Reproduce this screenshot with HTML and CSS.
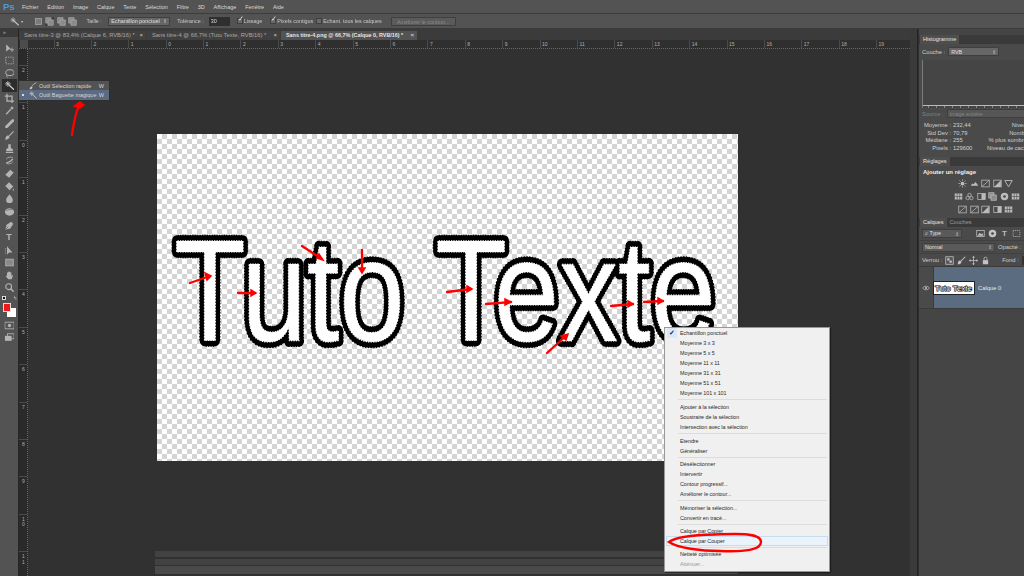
FILE: index.html
```html
<!DOCTYPE html>
<html lang="fr">
<head>
<meta charset="utf-8">
<title>Photoshop</title>
<link rel="stylesheet" href="styles.css">
</head>
<body>
<svg class="defs" width="0" height="0">
  <symbol id="i-move" viewBox="0 0 12 12"><path d="M2 1v9l2.500-2.500 3-1L2 1z" fill="currentColor"/><path d="M9 5v5M6.500 7.500h5" stroke="currentColor" fill="none"/></symbol>
  <symbol id="i-marq" viewBox="0 0 12 12"><rect x="1.500" y="2" width="9" height="8" fill="none" stroke="currentColor" stroke-dasharray="1.500 1.200"/></symbol>
  <symbol id="i-lasso" viewBox="0 0 12 12"><ellipse cx="6.500" cy="5" rx="5" ry="3.500" fill="none" stroke="currentColor" stroke-width="1.200"/><path d="M3 8c-1 1 0 2 1 3" fill="none" stroke="currentColor"/></symbol>
  <symbol id="i-wand" viewBox="0 0 12 12"><path d="M5 5l6.500 6" stroke="currentColor" stroke-width="1.500"/><path d="M4 .5v7M.5 4h7M1.800 1.800l4.400 4.400M6.200 1.800L1.800 6.200" stroke="currentColor" stroke-width=".9"/></symbol>
  <symbol id="i-quick" viewBox="0 0 12 12"><path d="M11 1C7 3 5 5 4 7" stroke="currentColor" stroke-width="1.300" fill="none"/><path d="M1 11c0-3 1-4 3-4 1 0 1.500 1 1 2-1 1.500-2 2-4 2z" fill="currentColor"/></symbol>
  <symbol id="i-crop" viewBox="0 0 12 12"><path d="M3 0v9h9M0 3h9v9" fill="none" stroke="currentColor" stroke-width="1.500"/></symbol>
  <symbol id="i-drop" viewBox="0 0 12 12"><path d="M2 10.500L7.500 4.500" stroke="currentColor" stroke-width="1.500"/><path d="M7 3l2-2 2 2-2 2z" fill="currentColor"/></symbol>
  <symbol id="i-heal" viewBox="0 0 12 12"><path d="M2.500 10L10 2.500" stroke="currentColor" stroke-width="3.500" stroke-linecap="round"/></symbol>
  <symbol id="i-brush" viewBox="0 0 12 12"><path d="M5 7l6-6" stroke="currentColor" stroke-width="1.400"/><path d="M1 11c0-3 1-5 3-5l2 1.500c0 2-2 3.500-5 3.500z" fill="currentColor"/></symbol>
  <symbol id="i-stamp" viewBox="0 0 12 12"><path d="M4.500 1h3v4l2.500 2v2H2V7l2.500-2zM1.500 10h9v1.500h-9z" fill="currentColor"/></symbol>
  <symbol id="i-hist" viewBox="0 0 12 12"><path d="M2 9c3-1 6-2 8-5" fill="none" stroke="currentColor" stroke-width="1.500"/><path d="M2 4.500c2-3 6-3 8-2M10 7.500c-2 3-6 3-8 2" fill="none" stroke="currentColor"/></symbol>
  <symbol id="i-erase" viewBox="0 0 12 12"><path d="M7 1.500l4 3.500-5.500 6L1 7.500z" fill="currentColor"/></symbol>
  <symbol id="i-fill" viewBox="0 0 12 12"><path d="M5.500 1l5 5-4.500 4.500-5-5z" fill="currentColor"/><path d="M10.500 8c1 1.500 1 3 0 3s-1-1.500 0-3z" fill="currentColor"/></symbol>
  <symbol id="i-tear" viewBox="0 0 12 12"><path d="M6 1c3 4 4 5 4 7a4 3.500 0 0 1-8 0c0-2 1-3 4-7z" fill="currentColor"/></symbol>
  <symbol id="i-sponge" viewBox="0 0 12 12"><ellipse cx="6" cy="6.500" rx="5.500" ry="4.500" fill="currentColor"/><path d="M2 5c2-1.500 5-2 8-1" stroke="#555" fill="none" stroke-width=".7"/></symbol>
  <symbol id="i-pen" viewBox="0 0 12 12"><path d="M1 11l1.500-6L8 1.500 10.500 4 7 9.500z" fill="currentColor"/><path d="M1 11l3.500-3.500" stroke="#555" stroke-width=".8"/></symbol>
  <symbol id="i-path" viewBox="0 0 12 12"><path d="M3 1v10l2.500-2.500h4z" fill="currentColor"/><path d="M1 3v7" stroke="currentColor" stroke-dasharray="1 1"/></symbol>
  <symbol id="i-rect" viewBox="0 0 12 12"><rect x="1.500" y="2" width="9" height="8" fill="#8a8a8a" stroke="currentColor"/></symbol>
  <symbol id="i-hand" viewBox="0 0 12 12"><path d="M3 6V2.500h1.300V5V1.500h1.400V5V1.500H7V5V2.500h1.300V7l1-1.500 1 .5L8.500 10.500h-4L1.500 7l.7-.8z" fill="currentColor"/></symbol>
  <symbol id="i-zoom" viewBox="0 0 12 12"><circle cx="5" cy="5" r="3.500" fill="none" stroke="currentColor" stroke-width="1.300"/><path d="M7.500 7.500l3.500 3.500" stroke="currentColor" stroke-width="1.800"/></symbol>
  <symbol id="i-mask" viewBox="0 0 12 12"><rect x=".5" y="2" width="11" height="8" fill="none" stroke="currentColor"/><circle cx="6" cy="6" r="2" fill="currentColor"/></symbol>
  <symbol id="i-screen" viewBox="0 0 12 12"><rect x="3.500" y="1.500" width="8" height="6" fill="none" stroke="currentColor"/><rect x=".5" y="4" width="8" height="6" fill="currentColor"/></symbol>
  <symbol id="i-sun" viewBox="0 0 12 12"><circle cx="6" cy="6" r="2.500" fill="currentColor"/><path d="M6 .5v2M6 9.500v2M.5 6h2M9.500 6h2M2 2l1.500 1.500M8.500 8.500L10 10M10 2L8.500 3.500M3.500 8.500L2 10" stroke="currentColor"/></symbol>
  <symbol id="i-levels" viewBox="0 0 12 12"><path d="M1 9l2-3 2 1 2-3 2 2 2 3z" fill="currentColor"/></symbol>
  <symbol id="i-curve" viewBox="0 0 12 12"><rect x="1" y="1.500" width="10" height="9" fill="none" stroke="currentColor"/><path d="M1.500 10L10.500 2" stroke="currentColor"/></symbol>
  <symbol id="i-expo" viewBox="0 0 12 12"><rect x="1" y="1.500" width="10" height="9" fill="none" stroke="currentColor"/><path d="M1.500 10.500l9-9v9z" fill="currentColor"/></symbol>
  <symbol id="i-vib" viewBox="0 0 12 12"><path d="M1 2h10L6 10.500z" fill="none" stroke="currentColor" stroke-width="1.200"/></symbol>
  <symbol id="i-grid" viewBox="0 0 12 12"><rect x="1" y="2" width="10" height="8" fill="currentColor"/><path d="M4.300 2v8M7.600 2v8M1 6h10" stroke="#474747" stroke-width=".8"/></symbol>
  <symbol id="i-tri" viewBox="0 0 12 12"><circle cx="6" cy="4" r="2.300" fill="none" stroke="currentColor"/><circle cx="3.500" cy="8" r="2.300" fill="none" stroke="currentColor"/><circle cx="8.500" cy="8" r="2.300" fill="none" stroke="currentColor"/></symbol>
  <symbol id="i-half" viewBox="0 0 12 12"><rect x="1" y="2" width="10" height="8" fill="none" stroke="currentColor"/><rect x="6" y="2" width="5" height="8" fill="currentColor"/></symbol>
  <symbol id="i-balls" viewBox="0 0 12 12"><circle cx="6" cy="6" r="5" fill="currentColor"/><circle cx="6" cy="6" r="1.800" fill="#474747"/></symbol>
  <symbol id="i-lock" viewBox="0 0 12 12"><rect x="2.500" y="5.500" width="7" height="5.500" fill="currentColor"/><path d="M4 5.500V3.500a2 2 0 0 1 4 0v2" fill="none" stroke="currentColor"/></symbol>
  <symbol id="i-arrows" viewBox="0 0 12 12"><path d="M6 .5v11M.5 6h11" stroke="currentColor"/><path d="M6 0l2 2H4zM6 12l2-2H4zM0 6l2-2v4zM12 6l-2-2v4z" fill="currentColor"/></symbol>
  <symbol id="i-eye" viewBox="0 0 12 12"><path d="M1 6c2-3.500 8-3.500 10 0-2 3.500-8 3.500-10 0z" fill="none" stroke="currentColor"/><circle cx="6" cy="6" r="1.500" fill="currentColor"/></symbol>
  <symbol id="i-checker" viewBox="0 0 12 12"><rect x="1" y="1" width="10" height="10" fill="#555" stroke="currentColor"/><path d="M3 3h3v3H3zM6 6h3v3H6z" fill="currentColor"/></symbol>
  <symbol id="i-img" viewBox="0 0 12 12"><rect x="1" y="2" width="10" height="8" fill="none" stroke="currentColor"/><path d="M2 9l3-4 2 2 1.500-1.500L10 9z" fill="currentColor"/></symbol>
  <symbol id="i-square" viewBox="0 0 12 12"><rect x="2" y="2" width="8" height="8" fill="#7a7a7a" stroke="currentColor"/></symbol>
  <symbol id="i-square2" viewBox="0 0 12 12"><rect x="1" y="1" width="7" height="7" fill="#8a8a8a" stroke="currentColor"/><rect x="4" y="4" width="7" height="7" fill="#8a8a8a" stroke="currentColor"/></symbol>
</svg>

<div class="app">
  <header class="menubar">
    <span class="logo">Ps</span>
    <nav class="menus">
      <span>Fichier</span><span>Edition</span><span>Image</span><span>Calque</span><span>Texte</span><span>Sélection</span><span>Filtre</span><span>3D</span><span>Affichage</span><span>Fenêtre</span><span>Aide</span>
    </nav>
  </header>

  <div class="options">
    <svg class="ic opt-wand"><use href="#i-wand"/></svg>
    <span class="opt-caret">▾</span>
    <svg class="ic opt-mode"><use href="#i-square"/></svg>
    <svg class="ic opt-mode on"><use href="#i-square2"/></svg>
    <svg class="ic opt-mode"><use href="#i-square2"/></svg>
    <svg class="ic opt-mode"><use href="#i-square2"/></svg>
    <span class="opt-label taille">Taille :</span>
    <span class="select sel-taille">Echantillon ponctuel<i>⇕</i></span>
    <span class="opt-label tol">Tolérance :</span>
    <span class="input">30</span>
    <span class="check on lissage"></span><span class="opt-label">Lissage</span>
    <span class="check on contig"></span><span class="opt-label">Pixels contigus</span>
    <span class="check echant"></span><span class="opt-label">Echant. tous les calques</span>
    <span class="btn-off">Améliorer le contour...</span>
  </div>

  <div class="main">
    <aside class="tools">
      <div class="tools-head">»</div>
      <svg class="ic tool"><use href="#i-move"/></svg>
      <svg class="ic tool"><use href="#i-marq"/></svg>
      <svg class="ic tool"><use href="#i-lasso"/></svg>
      <svg class="ic tool active"><use href="#i-wand"/></svg>
      <svg class="ic tool"><use href="#i-crop"/></svg>
      <svg class="ic tool"><use href="#i-drop"/></svg>
      <svg class="ic tool"><use href="#i-heal"/></svg>
      <svg class="ic tool"><use href="#i-brush"/></svg>
      <svg class="ic tool"><use href="#i-stamp"/></svg>
      <svg class="ic tool"><use href="#i-hist"/></svg>
      <svg class="ic tool"><use href="#i-erase"/></svg>
      <svg class="ic tool"><use href="#i-fill"/></svg>
      <svg class="ic tool"><use href="#i-tear"/></svg>
      <svg class="ic tool"><use href="#i-sponge"/></svg>
      <svg class="ic tool gap"><use href="#i-pen"/></svg>
      <span class="tool-t">T</span>
      <svg class="ic tool"><use href="#i-path"/></svg>
      <svg class="ic tool"><use href="#i-rect"/></svg>
      <svg class="ic tool"><use href="#i-hand"/></svg>
      <svg class="ic tool"><use href="#i-zoom"/></svg>
      <div class="swap"><i></i><b>↰</b></div>
      <div class="colors"><span class="bg"></span><span class="fg"></span></div>
      <svg class="ic tool mask"><use href="#i-mask"/></svg>
      <svg class="ic tool"><use href="#i-screen"/></svg>
    </aside>

    <section class="center">
      <div class="tabs">
        <span class="tab t1">Sans titre-3 @ 83,4% (Calque 6, RVB/16) *<i>×</i></span>
        <span class="tab t2">Sans titre-4 @ 66,7% (Tuto Texte, RVB/16) *<i>×</i></span>
        <span class="tab t3 cur">Sans titre-4.png @ 66,7% (Calque 0, RVB/16) *<i>×</i></span>
      </div>
      <div class="hruler">
        <span class="corner"></span>
        <div class="hticks">
          <span>3</span><span>2</span><span>1</span><span>0</span><span>1</span><span>2</span><span>3</span><span>4</span><span>5</span><span>6</span><span>7</span><span>8</span><span>9</span><span>10</span><span>11</span><span>12</span><span>13</span><span>14</span><span>15</span><span>16</span><span>17</span><span>18</span><span>19</span>
        </div>
      </div>
      <div class="work">
        <div class="vruler">
          <span>2</span><span>1</span><span>0</span><span>1</span><span>2</span><span>3</span><span>4</span><span>5</span><span>6</span><span>7</span><span>8</span><span>9</span><span>1<br>0</span><span>1<br>1</span>
        </div>
        <div class="stage">
          <div class="canvas">
            <svg class="art" width="581" height="327" viewBox="0 0 581 327">
              <defs>
                <text id="tt" class="tt" transform="translate(17 207) scale(.81 1)">Tuto Texte</text>
              </defs>
              <use href="#tt" class="l1"/>
              <use href="#tt" class="l2"/>
              <use href="#tt" class="l3"/>
            </svg>
          </div>
          <div class="strip s1"></div>
          <div class="strip s2"></div>
          <div class="strip s3"></div>
        </div>
      </div>
    </section>

    <div class="divider"></div>

    <aside class="panels">
      <div class="ptabs"><span class="ptab on">Histogramme</span></div>
      <div class="hist">
        <div class="row couche"><span class="lbl">Couche :</span><span class="select sel-rvb">RVB<i>⇕</i></span></div>
        <div class="graph"></div>
        <div class="row source"><span class="dim">Source :</span><span class="select sel-src dim">Image entière</span></div>
        <div class="stats">
          <span>Moyenne :</span><span>232,44</span><span>Niveau :</span>
          <span>Std Dev :</span><span>70,79</span><span>Nombre :</span>
          <span>Médiane :</span><span>255</span><span>% plus sombres :</span>
          <span>Pixels :</span><span>129600</span><span>Niveau de cache :</span>
        </div>
      </div>
      <div class="ptabs"><span class="ptab on">Réglages</span></div>
      <div class="adjust">
        <div class="adj-title">Ajouter un réglage</div>
        <div class="adj-row r1">
          <svg class="ic"><use href="#i-sun"/></svg><svg class="ic"><use href="#i-levels"/></svg><svg class="ic"><use href="#i-curve"/></svg><svg class="ic"><use href="#i-expo"/></svg><svg class="ic"><use href="#i-vib"/></svg>
        </div>
        <div class="adj-row r2">
          <svg class="ic"><use href="#i-grid"/></svg><svg class="ic"><use href="#i-tri"/></svg><svg class="ic"><use href="#i-half"/></svg><svg class="ic"><use href="#i-square2"/></svg><svg class="ic"><use href="#i-balls"/></svg><svg class="ic"><use href="#i-grid"/></svg>
        </div>
        <div class="adj-row r1">
          <svg class="ic"><use href="#i-curve"/></svg><svg class="ic"><use href="#i-curve"/></svg><svg class="ic"><use href="#i-expo"/></svg><svg class="ic"><use href="#i-half"/></svg><svg class="ic"><use href="#i-grid"/></svg>
        </div>
      </div>
      <div class="ptabs"><span class="ptab on">Calques</span><span class="ptab">Couches</span></div>
      <div class="layers">
        <div class="row ly-type">
          <span class="select sel-type">⌕ Type<i>⇕</i></span>
          <svg class="ic"><use href="#i-img"/></svg><svg class="ic"><use href="#i-balls"/></svg><span class="t-ic">T</span><svg class="ic"><use href="#i-marq"/></svg>
        </div>
        <div class="row ly-blend">
          <span class="select sel-norm">Normal<i>⇕</i></span><span class="lbl">Opacité :</span><span class="mini"></span>
        </div>
        <div class="row ly-lock">
          <span class="lbl">Verrou :</span>
          <svg class="ic"><use href="#i-checker"/></svg><svg class="ic"><use href="#i-brush"/></svg><svg class="ic"><use href="#i-arrows"/></svg><svg class="ic"><use href="#i-lock"/></svg>
          <span class="lbl fond">Fond :</span><span class="mini"></span>
        </div>
        <div class="layer">
          <span class="eye"><svg class="ic"><use href="#i-eye"/></svg></span>
          <div class="layer-sel">
            <svg class="thumb" viewBox="0 0 120 36"><rect width="120" height="36" fill="#fff"/><text x="3" y="28" class="thumb-t">Tuto Texte</text></svg>
            <span class="layer-name">Calque 0</span>
          </div>
        </div>
      </div>
    </aside>
  </div>

  <div class="flyout">
    <div class="fly-row"><svg class="ic"><use href="#i-quick"/></svg><span>Outil Sélection rapide</span><b>W</b></div>
    <div class="fly-row sel"><em></em><svg class="ic"><use href="#i-wand"/></svg><span>Outil Baguette magique</span><b>W</b></div>
  </div>

  <div class="ctx">
    <div class="mi checked">Echantillon ponctuel</div>
    <div class="mi">Moyenne 3 x 3</div>
    <div class="mi">Moyenne 5 x 5</div>
    <div class="mi">Moyenne 11 x 11</div>
    <div class="mi">Moyenne 31 x 31</div>
    <div class="mi">Moyenne 51 x 51</div>
    <div class="mi">Moyenne 101 x 101</div>
    <div class="sep"></div>
    <div class="mi">Ajouter à la sélection</div>
    <div class="mi">Soustraire de la sélection</div>
    <div class="mi">Intersection avec la sélection</div>
    <div class="sep"></div>
    <div class="mi">Etendre</div>
    <div class="mi">Généraliser</div>
    <div class="sep short"></div>
    <div class="mi">Désélectionner</div>
    <div class="mi">Intervertir</div>
    <div class="mi">Contour progressif...</div>
    <div class="mi">Améliorer le contour...</div>
    <div class="sep"></div>
    <div class="mi">Mémoriser la sélection...</div>
    <div class="mi">Convertir en tracé...</div>
    <div class="sep short"></div>
    <div class="mi">Calque par Copier</div>
    <div class="mi hot">Calque par Couper</div>
    <div class="sep short"></div>
    <div class="mi">Netteté optimisée</div>
    <div class="mi off">Atténuer...</div>
  </div>

  <svg class="marks" width="1024" height="576" viewBox="0 0 1024 576">
    <g class="red">
      <path d="M72 135c1-9 3-16 4-21 1-4 3-8 4-11"/>
      <path class="head" d="M74 106l6-4 4 3-4 3z"/>
      <path d="M190 283l20-7"/><path class="head" d="M205 273l6 3-4 4z"/>
      <path d="M238 293h17"/><path class="head" d="M251 290l5 3-5 3z"/>
      <path d="M302 246l20 13"/><path class="head" d="M317 258l2-4 4 6z"/>
      <path d="M362 250v22"/><path class="head" d="M359 268h6l-3 5z"/>
      <path d="M447 292l24-3"/><path class="head" d="M467 286l5 3-5 3z"/>
      <path d="M486 304l25-2"/><path class="head" d="M505 299l6 3-6 3z"/>
      <path d="M547 353l20-18"/><path class="head" d="M561 336l7-2-2 6z"/>
      <path d="M611 306l22-2"/><path class="head" d="M628 301l5 3-5 3z"/>
      <path d="M644 302l19-1"/><path class="head" d="M658 298l5 3-5 3z"/>
    </g>
    <path class="ring" d="M669 542C675 537 695 535 715 534.500 740 533.500 761 533 761 542 761 550 745 552 720 551 700 551 678 548 669 542z"/>
  </svg>
</div>
</body>
</html>
```

FILE: styles.css
```css
* { box-sizing: border-box; }
html, body { margin: 0; padding: 0; background: #313131; }
body { width: 1024px; height: 576px; overflow: hidden; font-family: "Liberation Sans", Arial, sans-serif; font-size: 5.8px; color: #d0d0d0; }
i, em { font-style: normal; }
.defs { position: absolute; }
.app { position: relative; width: 1024px; height: 576px; display: flex; flex-direction: column; overflow: hidden; filter: blur(.28px); }
.ic { width: 9px; height: 9px; color: #c4c4c4; flex: none; display: block; }

/* menu bar */
.menubar { height: 14px; background: #535353; border-bottom: 1px solid #3c3c3c; display: flex; align-items: center; flex: none; }
.logo { width: 22px; padding-left: 3px; font-size: 9.500px; font-weight: bold; color: #4d9ad8; }
.menus { display: flex; color: #d8d8d8; font-size: 5.500px; }
.menus span { margin-right: 8.800px; }

/* options */
.options { height: 15px; flex: none; background: #535353; display: flex; align-items: center; border-bottom: 1px solid #3a3a3a; color: #c8c8c8; font-size: 5.400px; }
.opt-wand { margin-left: 10px; }
.opt-caret { margin-left: 2px; font-size: 4px; width: 13px; }
.opt-mode { margin-right: 2.400px; width: 9px; height: 9px; color: #a8a8a8; }
.opt-mode.on { background: #3e3e3e; }
.opt-label { white-space: nowrap; }
.taille { margin-left: 7px; margin-right: 6.500px; }
.select { display: flex; align-items: center; justify-content: space-between; height: 9px; background: #666; border: 1px solid #3f3f3f; padding: 0 2px; color: #e0e0e0; white-space: nowrap; flex: none; font-size: 5.400px; }
.select i { font-size: 5px; color: #c0c0c0; }
.sel-taille { width: 62px; }
.tol { margin-left: 7px; }
.input { width: 21px; height: 9px; margin-left: 5px; background: #2f2f2f; padding-left: 2px; line-height: 9px; color: #ddd; }
.check { width: 6px; height: 6px; margin-right: 1px; background: #6a6a6a; border: 1px solid #3f3f3f; position: relative; flex: none; }
.check.on::after { content: "✓"; position: absolute; left: 0; top: -4px; font-size: 7px; color: #eee; }
.lissage { margin-left: 7px; }
.contig { margin-left: 8px; }
.echant { margin-left: 3px; margin-right: 1px; }
.btn-off { margin-left: 9px; width: 65px; height: 9px; line-height: 8px; border: 1px solid #3f3f3f; background: #5b5b5b; text-align: center; color: #8a8a8a; }

/* main */
.main { flex: 1; min-height: 0; display: flex; }
.tools { width: 19px; flex: none; background: #535353; border-right: 1px solid #262626; display: flex; flex-direction: column; align-items: center; }
.tools-head { width: 100%; height: 8px; background: #3a3a3a; color: #bbb; font-size: 5px; line-height: 6px; padding-left: 3px; margin-bottom: 4.500px; flex: none; }
.tool { width: 15px; height: 13px; padding: 1.500px 2.500px; flex: none; color: #b4b4b4; margin-bottom: -.46px; }
.tool.active { background: #2c2c2c; color: #d0d0d0; }
.tool.gap { margin-top: 1.500px; }
.tool-t { height: 13px; font-size: 9px; line-height: 13px; color: #b8b8b8; font-weight: bold; margin-bottom: -.46px; flex: none; }
.swap { width: 15px; height: 9px; display: flex; justify-content: space-between; align-items: center; font-size: 5px; flex: none; }
.swap i { width: 4px; height: 4px; background: #111; border: 1px solid #ddd; }
.swap b { font-weight: normal; color: #ccc; }
.colors { position: relative; width: 14px; height: 16px; flex: none; }
.colors .fg { position: absolute; left: 1px; top: 0; width: 8px; height: 9px; background: #f01818; border: 1px solid #ddd; }
.colors .bg { position: absolute; left: 5px; top: 5.500px; width: 9px; height: 9px; background: #fff; }

/* center */
.center { flex: 1; min-width: 0; display: flex; flex-direction: column; background: #313131; }
.tabs { height: 11px; flex: none; background: #3b3b3b; display: flex; align-items: flex-end; gap: 1px; }
.tab { height: 9px; line-height: 9px; background: #404040; color: #a8a8a8; padding-left: 5px; white-space: nowrap; display: flex; justify-content: space-between; padding-right: 3px; flex: none; }
.tab i { font-size: 6px; color: #ccc; }
.t1 { width: 127px; }
.t2 { width: 133px; }
.t3 { width: 136px; }
.tab.cur { background: #535353; color: #e4e4e4; font-weight: bold; font-size: 5.400px; }
.hruler { height: 9px; flex: none; background: #2f2f2f; display: flex; border-bottom: 1px dotted #666; }
.corner { width: 8px; height: 8px; margin-left: 1px; background: #4c4c4c; flex: none; }
.hticks { display: flex; margin-left: 25.500px; }
.hticks span { width: 37.400px; flex: none; padding-left: 1.500px; border-left: 1px solid #4a4a4a; font-size: 5px; line-height: 8px; color: #b0b0b0; }
.work { flex: 1; min-height: 0; display: flex; }
.vruler { width: 9px; flex: none; background: #2a2a2a; border-right: 1px dotted #666; padding-top: 16px; }
.vruler span { display: block; height: 37.400px; font-size: 5px; line-height: 5.500px; padding-left: 3px; color: #b0b0b0; border-top: 1px solid #4a4a4a; padding-top: 2px; }
.stage { flex: 1; padding: 85px 0 0 129px; min-width: 0; }
.canvas { width: 581px; height: 327px; background-color: #fff; background-image: repeating-conic-gradient(#d4d4d4 0 25%, #fff 0 50%); background-size: 10px 10px; }
.art { display: block; }
.tt { font-family: "Liberation Sans", Arial, sans-serif; font-size: 145px; stroke-linejoin: round; }
.l1 { fill: none; stroke: #000; stroke-width: 12.600px; stroke-dasharray: 1.500 1.500; }
.l2 { fill: #000; stroke: #000; stroke-width: 11.600px; }
.l3 { fill: #fff; stroke: #fff; stroke-width: 1.200px; stroke-dasharray: 1.500 1.500; }
.strip { width: 583px; margin-left: -2px; background: #424242; }
.s1 { height: 6px; margin-top: 90px; }
.s2 { height: 6px; margin-top: 2px; }
.s3 { height: 8px; margin-top: 1px; background: #4a4a4a; }

/* panels */
.divider { width: 8px; flex: none; background: #3a3a3a; border-right: 1px solid #232323; }
.panels { width: 106px; flex: none; background: #454545; overflow: hidden; display: flex; flex-direction: column; padding-top: 6px; border-left: 1px solid #2f2f2f; }
.ptabs { height: 9px; flex: none; background: #3a3a3a; display: flex; padding-left: 1px; }
.ptab { line-height: 9px; padding: 0 3px; color: #9a9a9a; font-size: 5.600px; }
.ptab.on { background: #4e4e4e; color: #e4e4e4; }
.row { display: flex; align-items: center; white-space: nowrap; }
.hist { height: 113px; flex: none; background: #4a4a4a; padding: 3px 0 0 3px; overflow: hidden; }
.couche { height: 9px; gap: 3px; }
.sel-rvb { width: 51px; }
.graph { height: 48px; margin-top: 4px; width: 200px; background: linear-gradient(#7b7b7b, #7b7b7b) 0 100%/1px 100% no-repeat, linear-gradient(#bbb, #bbb) 0 calc(100% - 2px)/100% 1px no-repeat, repeating-linear-gradient(90deg, #888 0 1px, transparent 1px 8px) 6px 100%/100% 3px no-repeat, #454545; }
.source { height: 9px; margin-top: 1px; gap: 3px; }
.dim { color: #808080; }
.sel-src { width: 90px; background: #565656; color: #858585; }
.stats { display: grid; grid-template-columns: 29px 32px 46px; column-gap: 2px; margin-top: 4px; grid-auto-rows: 7.500px; line-height: 7.500px; white-space: nowrap; }
.stats span:nth-child(3n+1) { text-align: right; }
.stats span:nth-child(3n) { text-align: right; }
.adjust { height: 52px; flex: none; background: #4a4a4a; padding-top: 3px; }
.adj-title { font-weight: bold; color: #eee; padding-left: 4px; font-size: 6px; margin-bottom: 4px; }
.adj-row { display: flex; gap: 2.600px; height: 9px; margin-bottom: 4px; }
.adj-row .ic { color: #bcbcbc; }
.r1 { padding-left: 39px; }
.r2 { padding-left: 34.500px; }
.layers { flex: none; background: #4a4a4a; border-bottom: 1px solid #3a3a3a; }
.ly-type { height: 13px; padding-left: 3px; gap: 3px; }
.sel-type { width: 40px; margin-right: 11px; background: #5a5a5a; }
.t-ic { font-size: 8px; font-weight: bold; color: #bcbcbc; width: 9px; text-align: center; }
.ly-blend { height: 13px; padding-left: 3px; gap: 3px; border-top: 1px solid #404040; }
.sel-norm { width: 73px; background: #5a5a5a; }
.mini { width: 20px; height: 9px; background: #333; flex: none; }
.ly-lock { height: 13px; padding-left: 3px; gap: 3px; border-top: 1px solid #404040; }
.fond { margin-left: 9px; }
.layer { height: 42px; display: flex; border-top: 1px solid #3a3a3a; }
.eye { width: 15px; flex: none; display: flex; align-items: center; justify-content: center; border-right: 1px solid #3a3a3a; }
.eye .ic { width: 8px; height: 8px; }
.layer-sel { flex: 1; background: #5b6b80; display: flex; align-items: center; gap: 4px; }
.thumb { width: 40px; height: 12px; flex: none; outline: 1px solid #222; }
.thumb-t { font-family: "Liberation Sans", Arial, sans-serif; font-size: 24px; fill: #fff; stroke: #000; stroke-width: 3.500px; paint-order: stroke; }
.layer-name { color: #e8e8e8; }

/* tool flyout */
.flyout { position: absolute; left: 18px; top: 80px; width: 92px; height: 21px; background: #535353; border: 1px solid #2e2e2e; color: #d6d6d6; font-size: 5.500px; }
.fly-row { height: 9px; display: flex; align-items: center; position: relative; padding-left: 10px; }
.fly-row .ic { width: 8px; height: 8px; margin-right: 2px; }
.fly-row span { flex: 1; white-space: nowrap; }
.fly-row b { font-weight: normal; margin-right: 5px; }
.fly-row.sel { background: #5a6b82; height: 10px; }
.fly-row em { position: absolute; left: 3px; top: 4px; width: 2px; height: 2px; background: #fff; border-radius: 50%; }

/* context menu */
.ctx { position: absolute; left: 664px; top: 327px; width: 166px; height: 245px; background: #f0f0f0; border: 1px solid #979797; box-shadow: 1px 1px 1px rgba(0,0,0,.4); padding: 0 1px; color: #2b2b2b; font-size: 5.400px; letter-spacing: -.05px; }
.mi { height: 10px; line-height: 10px; padding-left: 14px; white-space: nowrap; position: relative; }
.mi.off { color: #9a9a9a; }
.mi.hot { background: #eaf2fb; outline: 1px solid #c8dcf0; outline-offset: -1px; }
.mi.checked::before { content: "✓"; position: absolute; left: 1px; top: 0; width: 10px; height: 10px; line-height: 10px; text-align: center; background: #dbe9f7; color: #12207c; font-size: 7px; font-weight: bold; }
.sep { height: 4px; position: relative; }
.sep.short { height: 3px; }
.sep::after { content: ""; position: absolute; left: 12px; right: 1px; top: 1px; height: 1px; background: #dcdcdc; }

/* annotations */
.marks { position: absolute; left: 0; top: 0; pointer-events: none; }
.red path { fill: none; stroke: #f00; stroke-width: 2.300px; stroke-linecap: round; }
.red path.head { fill: #f00; stroke-width: 1.500px; }
.ring { fill: none; stroke: #f00; stroke-width: 2.400px; }
```
